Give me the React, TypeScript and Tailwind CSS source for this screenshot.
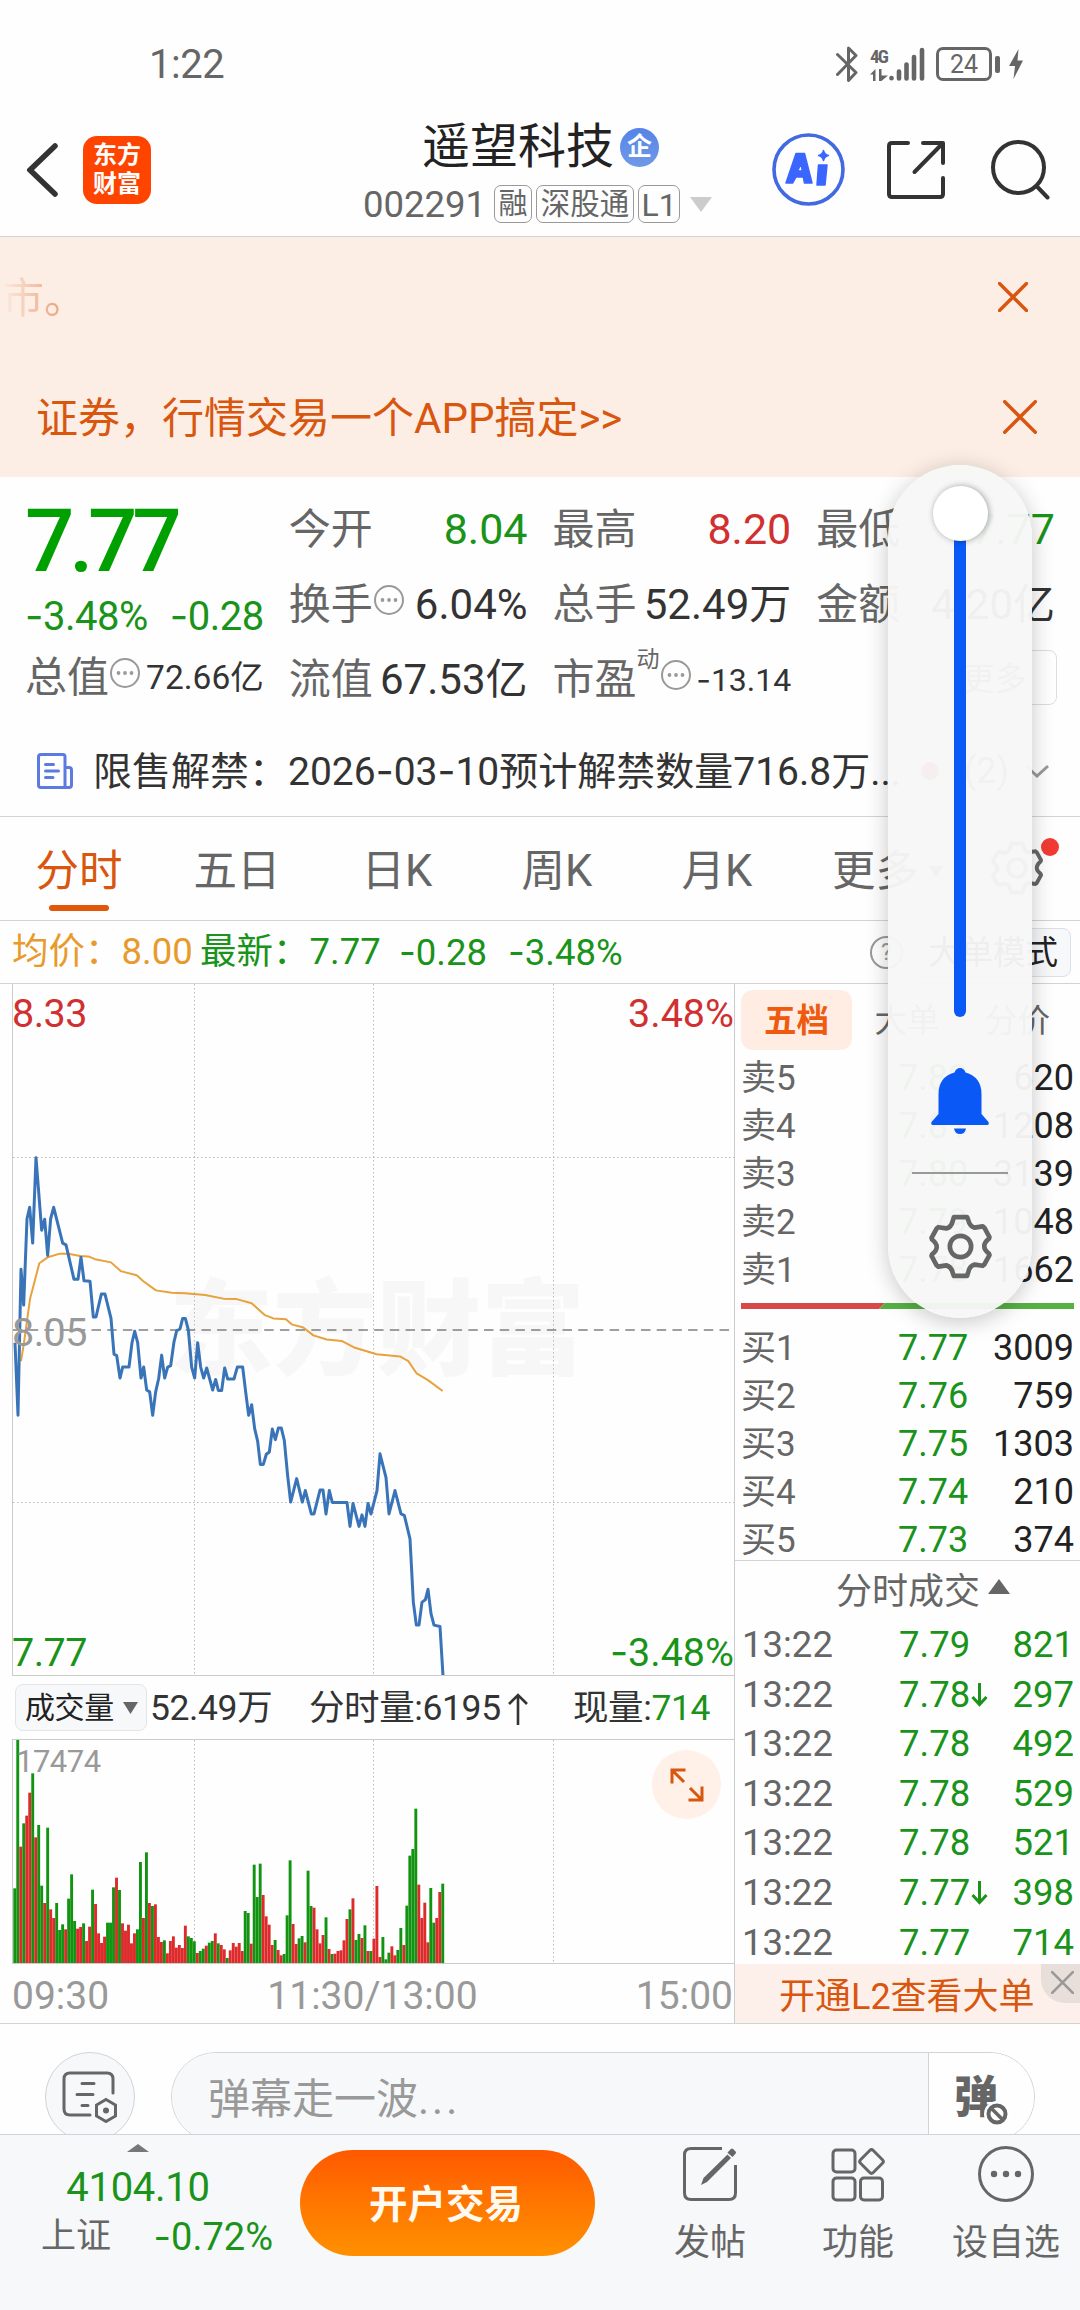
import React from "react";

const PRICE_LINE =
  "45,790 54,948 63,630 71,708 81,520 89,495 98,573 108,387 125,545 134,521 143,600 152,520 161,495 188,573 198,577 222,652 234,652 243,604 252,655 270,656 280,734 288,734 304,684 315,684 333,737 342,815 350,818 360,867 368,843 387,843 396,790 404,765 413,790 423,867 431,843 440,893 449,897 458,948 467,897 476,868 485,817 494,867 503,843 512,840 522,788 530,764 540,760 548,737 556,737 565,762 575,843 584,867 593,790 602,843 611,867 620,845 638,893 647,870 655,894 665,894 674,845 683,869 702,869 712,843 728,843 737,897 746,948 755,925 764,977 773,1005 781,1055 790,1055 799,1033 808,1028 817,978 826,1001 835,976 844,976 853,1003 863,1080 872,1137 890,1086 907,1137 916,1112 934,1163 942,1163 960,1111 969,1111 978,1163 988,1112 997,1138 1041,1138 1050,1190 1059,1140 1077,1190 1086,1165 1095,1190 1104,1140 1113,1163 1131,1112 1140,1032 1158,1084 1167,1163 1185,1112 1203,1163 1213,1166 1230,1217 1240,1355 1249,1405 1257,1405 1266,1355 1276,1350 1284,1327 1293,1380 1302,1405 1320,1408 1329,1515";

const AVG_LINE =
  "63,830 72,790 90,695 118,617 143,604 180,596 205,596 240,601 265,602 285,608 333,615 362,634 410,643 430,656 468,676 515,681 555,682 615,686 670,694 710,695 755,704 795,730 820,737 858,739 875,750 910,757 940,774 980,783 1025,786 1065,801 1130,815 1200,820 1225,830 1250,857 1285,872 1328,895";

// Each entry is the direction of the minute followed by its volume height.
const VOLUME =
  "g224 g672 r349 g419 r442 r511 g569 r377 g414 g232 r180 g406 r161 r135 g180 g99 g116 r101 g193 g266 g126 r103 r108 g119 r66 r109 g220 r177 r89 r60 r79 g121 g121 g227 r256 g219 r119 r97 r115 r59 r89 g101 g303 r135 g332 r180 g171 r176 r78 r63 g68 r29 r66 r80 r46 r54 r45 r112 g80 g75 g65 r30 g36 g43 r52 g61 g66 r89 g59 r54 r41 g15 r38 r60 r49 r60 r36 g156 g150 r58 g295 g198 g298 r204 r140 r115 r54 g69 r39 r23 g27 g143 g308 r117 r57 g74 g81 r62 g277 g171 r166 r101 r59 r84 g137 r42 g27 r28 r36 r38 r68 r132 g161 r194 g69 g87 r75 g113 r36 g36 r73 r231 r18 g78 g11 g31 r50 r23 g39 g105 r54 g172 g322 g342 g463 r235 r135 r181 r62 g225 g121 r135 r213 g238"
    .split(" ")
    .map((s) => ({ up: s[0] === "r", h: Number(s.slice(1)) / 3 }));

const ASKS = [
  ["卖5", "7.82", "620"],
  ["卖4", "7.81", "1208"],
  ["卖3", "7.80", "3139"],
  ["卖2", "7.79", "1048"],
  ["卖1", "7.78", "1662"],
];
const BIDS = [
  ["买1", "7.77", "3009"],
  ["买2", "7.76", "759"],
  ["买3", "7.75", "1303"],
  ["买4", "7.74", "210"],
  ["买5", "7.73", "374"],
];
const TRADES: [string, boolean, string][] = [
  ["7.79", false, "821"],
  ["7.78", true, "297"],
  ["7.78", false, "492"],
  ["7.78", false, "529"],
  ["7.78", false, "521"],
  ["7.77", true, "398"],
  ["7.77", false, "714"],
];

/** Numeric text; the sign is set in a face with a wider hyphen. */
function Num({ children }: { children: string }) {
  return (
    <>
      {children.split(/(-)/).map((part, i) =>
        part === "-" ? (
          <span key={i} className="font-['Inter']">-</span>
        ) : (
          <React.Fragment key={i}>{part}</React.Fragment>
        )
      )}
    </>
  );
}

function Hint() {
  return (
    <svg viewBox="0 0 30 30" className="mb-[9px] ml-px size-[30px] shrink-0" fill="none" stroke="#999" strokeWidth="2">
      <circle cx="15" cy="15" r="14" />
      <g fill="#999" stroke="none">
        <circle cx="8.5" cy="15" r="1.9" />
        <circle cx="15" cy="15" r="1.9" />
        <circle cx="21.5" cy="15" r="1.9" />
      </g>
    </svg>
  );
}

function Close({ className }: { className: string }) {
  return (
    <svg viewBox="0 0 30 30" className={className} fill="none" stroke="currentColor" strokeLinecap="round">
      <path d="M1.5 1.5 28.5 28.5M28.5 1.5 1.5 28.5" />
    </svg>
  );
}

function Gear({ className }: { className: string }) {
  return (
    <svg viewBox="0 0 64 64" className={className} fill="none" stroke="currentColor" strokeWidth="4.6" strokeLinejoin="round">
      <path d="M25.5 3h13l1.2 3.2q1.4 6 6.2 7.2l8-1.2 1.6 1.3 5 9.2-.5 1.6q-4.6 3.6-4.6 7.4t4.6 7.2l.5 1.6-5 9.2-1.6 1.3-8-1.2q-4.8 1.2-6.2 7.2L38.500 61h-13l-1.200-3.200q-1.400-6-6.200-7.200l-8 1.200-1.600-1.300-5-9.200.5-1.600q4.600-3.400 4.600-7.200T4 25.100l-.5-1.600 5-9.200 1.600-1.300 8 1.200q4.800-1.200 6.200-7.200z" />
      <circle cx="32" cy="32" r="10.500" />
    </svg>
  );
}

function Bluetooth() {
  return (
    <svg viewBox="0 0 22 36" className="h-9 w-[22px]" fill="none" stroke="#666" strokeWidth="3" strokeLinecap="round" strokeLinejoin="round">
      <path d="M1.500 8.500 20 26.500 12.500 34.500V2L20 9.500 1.500 28.500" />
    </svg>
  );
}

function StatusBar() {
  return (
    <div className="flex h-[103px] items-center pt-[25px] pl-[149px] text-[#666]">
      <span className="w-[687px] pt-[2px] text-[40px] tracking-[-0.500px]">1:22</span>
      <Bluetooth />
      <div className="ml-[12px] flex h-[34px] w-[19px] flex-col justify-between">
        <span className="font-['Roboto_Condensed','Roboto'] text-[19px] font-bold tracking-[-1.800px]">4G</span>
        <svg viewBox="0 0 18 12" className="h-3 w-[18px]" fill="#666">
          <path d="M0 5.500 5.500 0v12H3V5.500zM18 6.500 11.500 12H9V0h2.500v6.500z" />
        </svg>
      </div>
      <svg viewBox="0 0 36 34" className="h-[34px] w-9" fill="none" stroke="#666" strokeWidth="4.600" strokeLinecap="round">
        <path d="M2.500 31v.2M10 24.500v7M17.500 17.500v14M25 10v21.500M33 3v28.500" />
      </svg>
      <div className="ml-[11px] flex h-[34px] w-[56px] items-center justify-center rounded-[7px] border-[3px] border-[#666] text-[25px]">24</div>
      <div className="ml-[3px] h-[17px] w-[5px] rounded-[2px] bg-[#666]" />
      <svg viewBox="0 0 14 30" className="ml-[9px] h-[30px] w-[14px]" fill="#666">
        <path d="M9.500 0 0 17h6l-1.500 13L14 11.500H8.500z" />
      </svg>
    </div>
  );
}

function Header() {
  return (
    <header className="flex h-[134px] items-center border-b border-[#d3d3d3] pl-[27px]">
      <svg viewBox="0 0 31 54" className="h-[54px] w-[31px] shrink-0" fill="none" stroke="#333" strokeWidth="5.500" strokeLinecap="round">
        <path d="M28 3 3 27 28 51" strokeLinejoin="miter" />
      </svg>
      <div className="ml-[25px] flex size-[68px] shrink-0 flex-col items-center justify-center gap-[5px] rounded-[14px] bg-[#ff4400] pb-px text-[24px] font-bold text-white">
        <span>东方</span>
        <span>财富</span>
      </div>
      <div className="ml-[213px] flex h-full w-[348px] shrink-0 flex-col pt-[20px]">
        <div className="flex h-[48px] items-center pl-[58px] text-[48px] text-[#222]">
          遥望科技
          <span className="ml-[6px] flex size-[39px] items-center justify-center rounded-full bg-linear-to-b from-[#5584e6] to-[#7199e8] pb-px text-[25px] font-bold text-white">企</span>
        </div>
        <div className="mt-[14px] flex h-[38px] items-center text-[#666]">
          <span className="-ml-px w-[131px] pt-[2px] text-[36.500px]">002291</span>
          <span className="flex h-[38px] w-[38px] items-center justify-center rounded-[7px] border border-[#999] pt-px text-[29px]">融</span>
          <span className="ml-[4px] flex h-[38px] w-[98px] items-center justify-center rounded-[7px] border border-[#999] pt-px text-[29.500px]">深股通</span>
          <span className="ml-[4px] flex h-[38px] w-[42px] items-center justify-center rounded-[7px] border border-[#999] pt-[2px] text-[32px]">L1</span>
          <svg viewBox="0 0 22 15" className="ml-[10px] h-[15px] w-[22px]" fill="#ccc">
            <path d="M0 0h22L11 15z" />
          </svg>
        </div>
      </div>
      <svg viewBox="0 0 73 73" className="ml-[60px] size-[73px] shrink-0" fill="none">
        <circle cx="36.500" cy="36.500" r="34.500" stroke="#4169e1" strokeWidth="3.600" />
        <g fill="#3a66ff" stroke="#3a66ff" strokeWidth="1.500" strokeLinejoin="round">
          <path fillRule="evenodd" d="M24 20.500h8.500l7.500 29.500h-7.500l-1.200-6h-7.300l-3.300 6H14zM29 30.500l-3.300 7.500h4.500z" />
          <path d="M46.500 32h8.500l-2 20h-8z" />
          <path d="M51.500 17.500q1 4.500 5 5-4 1-5 5-1-4-5-5 4-.5 5-5z" />
        </g>
      </svg>
      <svg viewBox="0 0 58 58" className="ml-[42px] size-[58px] shrink-0" fill="none" stroke="#333" strokeWidth="4" strokeLinecap="round" strokeLinejoin="round">
        <path d="M21 2H5Q2 2 2 5v48q0 3 3 3h48q3 0 3-3V37M36 2h20v20M55 3 27.500 31" />
      </svg>
      <svg viewBox="0 0 59 60" className="ml-[46px] h-[60px] w-[59px] shrink-0" fill="none" stroke="#333" strokeWidth="4" strokeLinecap="round">
        <circle cx="27.500" cy="27.500" r="25.500" />
        <path d="M45.500 46 56.500 57.500" />
      </svg>
    </header>
  );
}

function Banners() {
  return (
    <div className="flex h-[240px] flex-col bg-[#fceee5] text-[42px] text-[#d9560f]">
      <div className="flex h-[120px] items-center justify-between pr-[52px]">
        <span className="bg-linear-to-r from-[#fceee5] to-[#de8450] bg-clip-text pt-[4px] pl-[2px] text-transparent">市。</span>
        <Close className="size-[30px] stroke-[3.400]" />
      </div>
      <div className="flex h-[120px] items-center justify-between pr-[43px] pl-[36px]">
        <span className="pt-[4px]">证券，行情交易一个APP搞定&gt;&gt;</span>
        <Close className="size-[34px] stroke-[3]" />
      </div>
    </div>
  );
}

const cell = "flex h-[75px] items-center whitespace-nowrap text-[42px] text-[#666]";
const val = "ml-auto text-[#333]";

function Quote() {
  return (
    <section className="grid h-[238px] grid-cols-4 gap-x-[25px] px-[25px] pt-[15px]">
      <div className="flex flex-col">
        <div className="flex h-[100px] items-center pb-px text-[87px] font-medium tracking-[-5.300px] text-[#00a000]">7.77</div>
        <div className="flex h-[48px] items-center justify-between text-[40px] tracking-[-0.500px] text-[#199319]">
          <span><Num>-3.48%</Num></span>
          <span><Num>-0.28</Num></span>
        </div>
        <div className={cell}>
          总值<Hint />
          <span className={`${val} text-[33.500px]`}>72.66亿</span>
        </div>
      </div>
      <div>
        <div className={cell}>今开<span className="ml-auto text-[43px] text-[#199319]">8.04</span></div>
        <div className={cell}>换手<Hint /><span className={val}>6.04%</span></div>
        <div className={cell}>流值<span className={val}>67.53亿</span></div>
      </div>
      <div>
        <div className={cell}>最高<span className="ml-auto text-[43px] text-[#d03030]">8.20</span></div>
        <div className={cell}>总手<span className={val}>52.49万</span></div>
        <div className={cell}>
          市盈<span className="mb-[40px] text-[23px]">动</span><Hint />
          <span className={`${val} text-[32px]`}><Num>-13.14</Num></span>
        </div>
      </div>
      <div>
        <div className={cell}>最低<span className="ml-auto text-[43px] text-[#199319]">7.77</span></div>
        <div className={cell}>金额<span className={val}>4.20亿</span></div>
        <div className={cell}>
          <span className="-mr-[2px] mb-[4px] ml-auto flex h-[55px] w-[125px] items-center justify-center rounded-[8px] border border-[#ddd] pt-[2px] text-[32px]">更多</span>
        </div>
      </div>
    </section>
  );
}

function Notice() {
  return (
    <div className="flex h-[102px] items-center border-b border-[#d3d3d3] pt-[10px] pl-[37px] text-[39px] whitespace-nowrap text-[#333]">
      <svg viewBox="0 0 36 36" className="mr-[20px] size-9" fill="none" stroke="#5b7be0" strokeWidth="3" strokeLinecap="round" strokeLinejoin="round">
        <path d="M28 34.500H4q-2.500 0-2.500-2.500V4Q1.500 1.500 4 1.500h22Q28 1.500 28 4zM28 14.500h4q2.500 0 2.500 2.500v15q0 2.500-2.500 2.500h-4M8.500 11.500h8M8.500 18h13M8.500 24.500h7.500" />
      </svg>
      <span className="w-[828px] pt-[2px]">限售解禁：2026<span className="font-['Inter']">-</span>03<span className="font-['Inter']">-</span>10预计解禁数量716.8万...</span>
      <span className="size-[18px] rounded-full bg-[#ef3b36]" />
      <span className="ml-[25px] text-[36px] text-[#666]">(2)</span>
      <svg viewBox="0 0 24 14" className="ml-auto mr-[31px] h-[14px] w-6" fill="none" stroke="#999" strokeWidth="3">
        <path d="M1 2 12 12 23 2" />
      </svg>
    </div>
  );
}

function Tabs() {
  return (
    <nav className="flex h-[104px] items-center border-b border-[#d3d3d3] pt-[7px] text-[43.500px] text-[#666]">
      <div className="relative w-[158px] text-center text-[#d9560f]">
        分时
        <span className="absolute top-[55px] left-[49px] h-[6px] w-[60px] rounded-full bg-[#e3570b]" />
      </div>
      {["五日", "日K", "周K", "月K"].map((t) => (
        <div key={t} className="w-[160px] pr-[2px] text-center">{t}</div>
      ))}
      <div className="ml-[34px]">更多</div>
      <svg viewBox="0 0 14 12" className="ml-[10px] h-3 w-[14px]" fill="#666">
        <path d="M0 0h14L7 12z" />
      </svg>
      <div className="relative mt-[-9px] ml-[47px]">
        <Gear className="size-[54px]" />
        <span className="absolute -top-[3px] right-[-15px] size-[18px] rounded-full bg-[#f23a34]" />
      </div>
    </nav>
  );
}

function InfoRow() {
  return (
    <div className="flex h-[63px] items-center border-b border-[#d3d3d3] pt-px pr-[9px] pl-[12px] text-[36.500px] whitespace-nowrap text-[#199319]">
      <span className="w-[188px] text-[#e89a2c]">均价：8.00</span>
      <span className="w-[199px]">最新：7.77</span>
      <span className="w-[109px]"><Num>-0.28</Num></span>
      <span><Num>-3.48%</Num></span>
      <span className="ml-auto flex size-[33px] items-center justify-center rounded-full border-[2.500px] border-[#999] text-[23px] text-[#999]">?</span>
      <span className="ml-[12px] flex h-[49px] w-[156px] items-center justify-center rounded-[8px] border border-[#dcdfe6] bg-[#f7f8fa] pt-[2px] text-[32.500px] text-[#222]">大单模式</span>
    </div>
  );
}

function PriceChart() {
  return (
    <div className="relative ml-[12px] h-[692px] border-b border-l border-[#ccc]">
      <div className="absolute top-[296px] left-[156px] text-[104px] font-black text-[#f7f7f7]">东方财富</div>
      <svg viewBox="0 0 721 691" className="absolute inset-0 size-full" fill="none">
        <g stroke="#bbb" strokeDasharray="1.500 2.500">
          <path d="M181.500 0V691M360.500 0V691M540.500 0V691M0 173.500H721M0 518.500H721" />
        </g>
        <path d="M0 346H721" stroke="#808080" strokeWidth="1.500" strokeDasharray="9.500 6.200" />
        <g transform="translate(-13 -4) scale(0.33333 0.45914)" strokeLinejoin="round">
          <polyline points={AVG_LINE} stroke="#e8a13c" strokeWidth="2" vectorEffect="non-scaling-stroke" />
          <polyline points={PRICE_LINE} stroke="#3a74b8" strokeWidth="3" vectorEffect="non-scaling-stroke" />
        </g>
      </svg>
      <span className="absolute top-[10px] -left-px text-[39.500px] tracking-[-0.500px] text-[#d03030]">8.33</span>
      <span className="absolute top-[10px] right-0 text-[39.500px] text-[#d03030]">3.48%</span>
      <span className="absolute top-[329px] -left-px text-[39.500px] tracking-[-0.500px] text-[#999]">8.05</span>
      <span className="absolute bottom-[3px] -left-px text-[39.500px] tracking-[-0.500px] text-[#199319]">7.77</span>
      <span className="absolute right-0 bottom-[3px] text-[39.500px] text-[#199319]"><Num>-3.48%</Num></span>
    </div>
  );
}

function VolumeChart() {
  return (
    <div className="relative ml-[12px] h-[225px] border-t border-b border-l border-[#ccc]">
      <svg viewBox="0 0 721 223" className="absolute inset-0 size-full">
        <path d="M181.500 0V223M360.500 0V223M540.500 0V223" stroke="#bbb" strokeDasharray="1.500 2.500" />
        {VOLUME.map((v, i) => (
          <rect key={i} x={0.3 + i * 2.993} y={223 - v.h} width="2.900" height={v.h} fill={v.up ? "#dd2a2a" : "#129412"} />
        ))}
      </svg>
      <span className="absolute top-[6px] left-[3px] text-[31px] tracking-[-0.500px] text-[#999]">17474</span>
      <div className="absolute top-[10px] right-[13px] flex size-[69px] items-center justify-center rounded-full bg-[#fff0e8]">
        <svg viewBox="0 0 34 34" className="size-[34px]" fill="none" stroke="#d9560f" strokeWidth="3">
          <path d="M15.500 2H2v13.500M2 2 14 14M32 18.500V32H18.500M32 32 20 20" />
        </svg>
      </div>
    </div>
  );
}

function ChartColumn() {
  return (
    <div className="flex w-[734px] shrink-0 flex-col">
      <PriceChart />
      <div className="flex h-[63px] items-center pt-px pl-[15px] text-[35.500px] tracking-[-0.400px] whitespace-nowrap text-[#333]">
        <span className="mb-px flex h-[47px] w-[132px] items-center rounded-[8px] border border-[#e3e5ea] bg-[#f7f8fa] pl-[9px] text-[30px] text-[#222]">
          成交量
          <svg viewBox="0 0 15 12" className="ml-[9px] h-3 w-[15px]" fill="#666">
            <path d="M0 0h15L7.500 12z" />
          </svg>
        </span>
        <span className="ml-[3px] w-[159px] pt-[2px]">52.49万</span>
        <span className="flex w-[264px] items-center pt-[2px]">
          分时量:6195
          <svg viewBox="0 0 20 32" className="ml-[7px] h-8 w-5" fill="none" stroke="#333" strokeWidth="2.600">
            <path d="M10 32V2M1 11 10 2 19 11" />
          </svg>
        </span>
        <span className="pt-[2px]">现量:<span className="text-[#199319]">714</span></span>
      </div>
      <VolumeChart />
      <div className="grid h-[59px] grid-cols-3 items-center pt-[6px] pr-px pl-[12px] text-[39px] text-[#999]">
        <span>09:30</span>
        <span className="text-center">11:30/13:00</span>
        <span className="text-right">15:00</span>
      </div>
    </div>
  );
}

function Level({ row }: { row: string[] }) {
  return (
    <div className="grid h-[48px] shrink-0 grid-cols-[157px_90px_1fr] items-center pt-[2px] pr-[6px] pl-[6px] text-[36px]">
      <span className="text-[35px] text-[#666]">{row[0]}</span>
      <span className="text-[#199319]">{row[1]}</span>
      <span className="text-right text-[#222]">{row[2]}</span>
    </div>
  );
}

function OrderColumn() {
  return (
    <div className="flex h-[1039px] flex-1 flex-col border-l border-[#ccc]">
      <div className="flex h-[69px] shrink-0 items-center pt-[3px] pl-[6px] text-[32.500px] text-[#666]">
        <span className="flex h-[60px] w-[111px] items-center justify-center rounded-[12px] bg-[#ffece2] pt-[3px] font-bold text-[#ee5a10]">五档</span>
        <span className="w-[110px] pt-[3px] text-center">大单</span>
        <span className="w-[111px] pt-[3px] text-center">分价</span>
      </div>
      {ASKS.map((r) => <Level key={r[0]} row={r} />)}
      <div className="flex h-[30px] shrink-0 items-center pr-[6px] pb-[5px] pl-[6px]">
        <svg viewBox="0 0 333 6" className="h-[6px] w-full">
          <path d="M0 0H144L138 6H0z" fill="#d94848" />
          <path d="M144 0H333V6H138z" fill="#56b143" />
        </svg>
      </div>
      <div className="h-[238px] shrink-0 border-b border-[#d3d3d3]">
        {BIDS.map((r) => <Level key={r[0]} row={r} />)}
      </div>
      <div className="flex h-[58px] shrink-0 items-center gap-[8px] pt-[4px] pl-[101px] text-[36px] text-[#666]">
        分时成交
        <svg viewBox="0 0 22 15" className="mb-[12px] h-[15px] w-[22px]" fill="#666">
          <path d="M11 0 22 15H0z" />
        </svg>
      </div>
      <div className="h-[345px] shrink-0 pt-px">
        {TRADES.map(([p, down, q], i) => (
          <div key={i} className="grid h-[49.600px] grid-cols-[157px_90px_1fr] items-center pt-px pr-[6px] pl-[7px] text-[36.500px] text-[#199319]">
            <span className="text-[#666]">13:22</span>
            <span className="flex items-center">
              {p}
              {down && (
                <svg viewBox="0 0 17 24" className="ml-px h-6 w-[17px]" fill="none" stroke="#199319" strokeWidth="3">
                  <path d="M8.500 0V21M1.500 14 8.500 21.500 15.500 14" />
                </svg>
              )}
            </span>
            <span className="text-right">{q}</span>
          </div>
        ))}
      </div>
      <div className="relative flex flex-1 items-center bg-[#fdf0ea] pt-[7px] pl-[44px] text-[36px] text-[#d9560f]">
        开通L2查看大单
        <span className="absolute top-0 right-0 flex h-[39px] w-[39px] items-center justify-center rounded-bl-[24px] bg-[#e9dfda] pb-[3px] pl-[4px] text-[#999]">
          <Close className="size-[23px] stroke-[3.500]" />
        </span>
      </div>
    </div>
  );
}

function CommentBar() {
  return (
    <div className="flex h-[110px] items-start overflow-hidden pt-[28px] pl-[45px]">
      <div className="flex size-[90px] shrink-0 items-center justify-center rounded-full border border-[#d0d3d8] bg-[#f7f8fa]">
        <svg viewBox="0 0 56 52" className="h-[52px] w-14" fill="none" stroke="#666" strokeWidth="3" strokeLinecap="round">
          <path d="M51 22V8Q51 2 45 2H8Q2 2 2 8v30q0 6 6 6h20M20 12.500h12M15 23.500h16M20 34.500h6" />
          <path d="M44 28.500 53.500 34v11L44 50.500 34.500 45V34z" />
          <circle cx="44" cy="39.500" r="3" fill="#666" stroke="none" />
        </svg>
      </div>
      <div className="ml-[36px] flex h-[90px] w-[864px] overflow-hidden rounded-full border border-[#d0d3d8]">
        <div className="flex w-[757px] items-center border-r border-[#d0d3d8] bg-[#f7f8fa] pt-[5px] pl-[36px] text-[42px] text-[#999]">
          弹幕走一波<span className="tracking-[3px]">...</span>
        </div>
        <div className="relative flex-1 bg-[#fefefe]">
          <span className="absolute top-[23px] left-[25px] text-[44px] font-black text-[#666]">弹</span>
          <svg viewBox="0 0 26 26" className="absolute top-[48px] left-[55px] size-[26px]">
            <circle cx="13" cy="13" r="13" fill="#fff" />
            <circle cx="13" cy="13" r="8.500" fill="none" stroke="#666" strokeWidth="4" />
            <path d="M7.500 7.500 18.500 18.500" stroke="#666" strokeWidth="3.500" />
          </svg>
        </div>
      </div>
    </div>
  );
}

function BottomItem({ label, className, children }: { label: string; className: string; children: React.ReactNode }) {
  return (
    <div className={`flex flex-col items-center gap-[23px] pt-[11px] text-[36px] text-[#666] ${className}`}>
      <svg viewBox="0 0 56 56" className="size-14" fill="none" stroke="#666" strokeWidth="3" strokeLinecap="butt" strokeLinejoin="round">
        {children}
      </svg>
      {label}
    </div>
  );
}

function BottomBar() {
  return (
    <footer className="flex h-[176px] border-t border-[#d0d3d8] bg-[#f7f8fa] whitespace-nowrap">
      <div className="flex w-[300px] flex-col items-center pt-[9px] pr-[24px]">
        <svg viewBox="0 0 22 8" className="h-2 w-[22px]" fill="#777">
          <path d="M11 0 22 8H0z" />
        </svg>
        <span className="mt-[16px] text-[40px] tracking-[-0.300px] text-[#199319]">4104.10</span>
        <div className="mt-[9px] mr-[-38px] flex w-[232px] items-center justify-between text-[#666]">
          <span className="text-[35px]">上证</span>
          <span className="text-[38px] text-[#199319]"><Num>-0.72%</Num></span>
        </div>
      </div>
      <button className="mt-[15px] h-[106px] w-[295px] rounded-full bg-linear-to-b from-[#ff5800] to-[#ff9000] pt-[4px] pr-[3px] text-[38.500px] font-bold text-[#fffaf0]">开户交易</button>
      <BottomItem label="发帖" className="ml-[41px] w-[148px]">
        <path d="M40 2.500H9Q2.500 2.500 2.500 9v38q0 6.500 6.500 6.500h38q6.500 0 6.500-6.500V19" />
        <path d="M19 39 21.500 32 45.500 8.500 49 12 25 36z" fill="#666" stroke="none" />
        <path d="M46.500 7.500 50 4l2.500 2.500-3 3.500" fill="#666" />
      </BottomItem>
      <BottomItem label="功能" className="w-[148px]">
        <rect x="3" y="4" width="22" height="22" rx="3.500" />
        <rect x="3" y="32" width="22" height="22" rx="3.500" />
        <rect x="30.500" y="32" width="22" height="22" rx="3.500" />
        <rect x="-9" y="-9" width="18" height="18" rx="2.500" transform="translate(41.500 15.500) rotate(45)" />
      </BottomItem>
      <BottomItem label="设自选" className="w-[148px]">
        <circle cx="28" cy="28" r="26.500" />
        <g fill="#666" stroke="none">
          <circle cx="16" cy="28" r="3.200" />
          <circle cx="28" cy="28" r="3.200" />
          <circle cx="40" cy="28" r="3.200" />
        </g>
      </BottomItem>
    </footer>
  );
}

function VolumeSlider() {
  return (
    <div className="absolute top-[465px] left-[888px] flex h-[853px] w-[144px] flex-col items-center rounded-[72px] bg-[#f7f7f7]/96 pt-[21px] shadow-[0_4px_22px_rgba(0,0,0,0.22)]">
      <div className="z-10 size-[55px] shrink-0 rounded-full bg-white shadow-[1px_0px_6px_rgba(0,0,0,0.35)]" />
      <div className="-mt-[10px] h-[486px] w-[12px] shrink-0 rounded-b-full bg-[#0a59f7]" />
      <svg viewBox="0 0 58 66" className="mt-[51px] h-[66px] w-[58px] shrink-0" fill="#0a59f7">
        <path d="M23.500 4.500Q25 0 29 0t5.500 4.500Q50.500 9 50.500 26v20L57.500 54q1 3-1.500 3H2Q-.5 57 .5 54L7.500 46V26Q7.500 9 23.500 4.500zM23 60.500H35Q34 66 29 66T23 60.500z" />
      </svg>
      <div className="mt-[38px] h-[1.500px] w-24 shrink-0 bg-[#999]" />
      <Gear className="mt-[40px] size-[65px] shrink-0 text-[#666]" />
    </div>
  );
}

export default function App() {
  return (
    <div className="relative h-[2310px] w-[1080px] overflow-hidden bg-[#fefefe] font-['Roboto','Noto_Sans_CJK_SC',sans-serif] leading-none [font-kerning:none]">
      <StatusBar />
      <Header />
      <Banners />
      <Quote />
      <Notice />
      <Tabs />
      <InfoRow />
      <main className="flex h-[1040px] border-b border-[#d3d3d3]">
        <ChartColumn />
        <OrderColumn />
      </main>
      <CommentBar />
      <BottomBar />
      <VolumeSlider />
    </div>
  );
}
